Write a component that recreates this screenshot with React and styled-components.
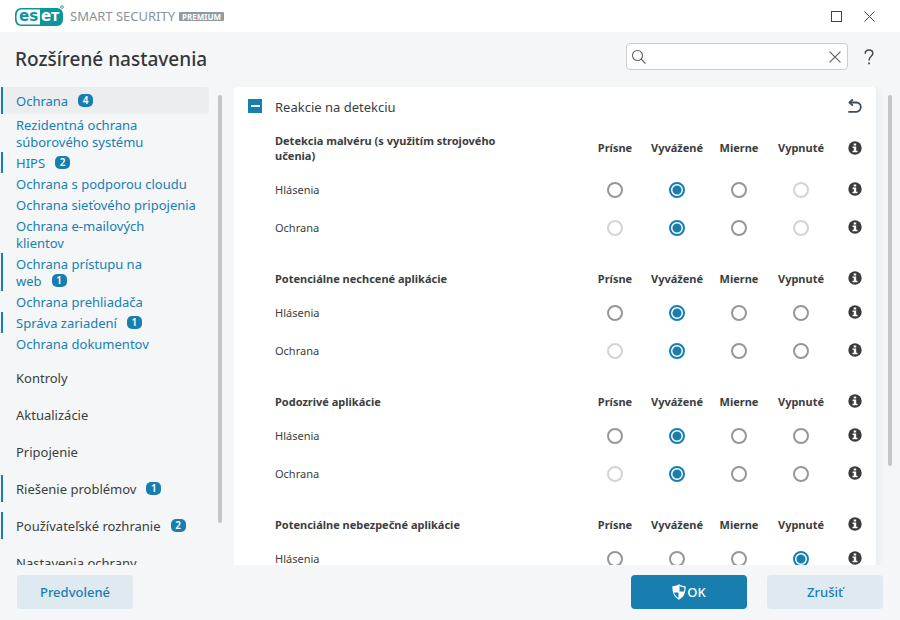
import React from 'react'
import styled, { createGlobalStyle } from 'styled-components'


const GlobalStyle = createGlobalStyle`
    * {
        box-sizing: border-box;
    }
    body {
        margin: 0;
        background: #f4f6f8;
        color: #3b3d40;
        font-family: "Noto Sans", "Open Sans", sans-serif;
        font-size: 13px;
    }
    button, input {
        font-family: inherit;
        font-size: inherit;
        color: inherit;
    }
`

const Window = styled.div`
    display: flex;
    flex-direction: column;
    height: 100vh;
    overflow: hidden;
`

export const TitleBar = styled.header`
    display: flex;
    align-items: center;
    flex: none;
    height: 32px;
    padding: 0 23px 0 15px;
    background: #fff;
`

const ProductName = styled.span`
    margin-left: 5px;
    color: #8b9399;
    font-weight: 400;
    line-height: 18px;
`

const Premium = styled.span`
    margin-left: 4px;
    padding: 0 3px;
    border-radius: 1px;
    background: #929a9f;
    color: #fff;
    font-size: 8px;
    font-weight: 700;
    line-height: 9px;
`

const WindowButtons = styled.div`
    display: flex;
    gap: 16px;
    margin-left: auto;
`

const IconButton = styled.button`
    display: flex;
    align-items: center;
    justify-content: center;
    flex: none;
    width: ${props => props.$size || '16px'};
    height: ${props => props.$size || '16px'};
    padding: 0;
    border: 0;
    background: none;
    color: ${props => props.$color || '#3f4246'};
    cursor: pointer;
`

const PageHeader = styled.div`
    display: flex;
    align-items: center;
    flex: none;
    height: 55px;
    padding: 0 23px 6px 15px;
`

const PageTitle = styled.h1`
    margin: 4px 0 0;
    color: #34373b;
    font-size: 19px;
    font-weight: 500;
    line-height: 26px;
`

const SearchBox = styled.label`
    display: flex;
    align-items: center;
    width: 222px;
    height: 27px;
    margin: 0 13px 0 auto;
    padding: 0 4px;
    border: 1px solid #cbcdcf;
    border-radius: 4px;
    background: #fff;
`

const SearchInput = styled.input`
    flex: 1;
    min-width: 0;
    padding: 0 4px;
    border: 0;
    outline: none;
    background: none;
`

const Content = styled.div`
    display: flex;
    flex: 1;
    min-height: 0;
`

const Sidebar = styled.aside`
    display: flex;
    flex: none;
    width: 234px;
    padding-left: 1px;
    overflow: hidden;
`

const Nav = styled.nav`
    flex: 1;
    min-width: 0;
`

const ScrollTrack = styled.div`
    flex: none;
    width: 4px;
    margin: ${props => props.$margin};
`

const ScrollThumb = styled.div`
    height: ${props => props.$length};
    border-radius: 2px;
    background: #c4c6c8;
`

const NavLink = styled.a`
    display: block;
    padding: 3px 12px 1px 13px;
    border-left: 2px solid ${props => (props.$changed ? '#187eb0' : 'transparent')};
    color: #187eb0;
    font-weight: 400;
    line-height: 17px;
    text-decoration: none;
    white-space: pre-line;
`

const NavSection = styled(NavLink)`
    padding-top: 6px;
    padding-bottom: 4px;
    margin-bottom: ${props => (props.$active ? '0' : '10px')};
    border-radius: 0 4px 4px 0;
    background: ${props => (props.$active ? '#ebedef' : 'none')};
    color: ${props => (props.$active ? '#187eb0' : '#3b3d40')};
`

const SubNav = styled.div`
    margin-bottom: 10px;
`

const LastWord = styled.span`
    white-space: nowrap;
`

const Badge = styled.span`
    display: inline-block;
    width: 15px;
    margin: 0 8px 0 10px;
    border-radius: 5px;
    background: #187eb0;
    color: #fff;
    font-size: 10px;
    font-weight: 600;
    line-height: 13px;
    text-align: center;
    vertical-align: 2px;
`

const Main = styled.main`
    display: flex;
    flex: 1;
    min-width: 0;
    overflow: hidden;
`

const Card = styled.section`
    flex: 1;
    min-width: 0;
    height: max-content;
    border-radius: 4px 4px 0 0;
    background: #fff;
    box-shadow: 0 0 8px rgba(60, 80, 100, 0.1);
`

const CardHead = styled.div`
    display: flex;
    align-items: center;
    gap: 13px;
    height: 38px;
    margin-bottom: 1px;
    padding: 0 14px;
`

const CardTitle = styled.h2`
    flex: 1;
    margin: 2px 0 0;
    font-size: 13px;
    font-weight: 400;
    line-height: 18px;
`

const SettingsTable = styled.table`
    width: 100%;
    margin-bottom: 17px;
    border-collapse: collapse;
    table-layout: fixed;
    font-size: 11px;
    line-height: 15px;
`

const LevelCol = styled.col`
    width: 62px;
`

const InfoCol = styled.col`
    width: 44px;
`

const GroupTitle = styled.th`
    padding: 7px 64px 8px 41px;
    text-align: left;
    font-weight: 700;
`

const LevelTitle = styled.th`
    padding: 0 0 2px;
    font-weight: 700;
    white-space: nowrap;
`

const RowTitle = styled.th`
    height: 38px;
    padding: 0 0 2px 41px;
    text-align: left;
    font-weight: 400;
`

const Cell = styled.td`
    padding: 0;
    text-align: center;
    vertical-align: middle;
`

const InfoCell = styled(Cell)`
    padding: 0 0 2px 2px;
`

const Radio = styled.input`
    appearance: none;
    display: block;
    width: 16px;
    height: 16px;
    margin: 0 auto;
    border: 2px solid #979797;
    border-radius: 50%;
    background: #fff;

    &:checked {
        border-color: #187eb0;
        background: radial-gradient(circle, #187eb0 4px, #fff 5px);
    }
    &:disabled {
        border-color: #d4d4d4;
    }
`

const InfoButton = styled(IconButton)`
    margin: 0 auto;
`

const Footer = styled.footer`
    display: flex;
    align-items: flex-start;
    flex: none;
    gap: 20px;
    height: 55px;
    padding: 10px 17px 0;
`

const ActionButton = styled.button`
    display: flex;
    align-items: center;
    justify-content: center;
    gap: 1px;
    width: 116px;
    height: 34px;
    padding: 0;
    margin-right: ${props => (props.$first ? 'auto' : '0')};
    border: 0;
    border-radius: 4px;
    background: ${props => (props.$primary ? '#187eb0' : '#dee9f0')};
    color: ${props => (props.$primary ? '#fff' : '#187eb0')};
    font-weight: 500;
    cursor: pointer;
`


const Logo = () => (
    <svg width="50" height="24" viewBox="0 0 50 24" role="img" aria-label="ESET">
        <rect x="0" y="4" width="48" height="18" rx="6" fill="#0a969c" />
        <path d="M7 5.500H25V20.500H7C3 20.500 1.500 18 1.500 13S3 5.500 7 5.500Z" fill="#fff" />
        <text x="4" y="17" fontFamily="DejaVu Sans" fontWeight="700" fontSize="15" fill="#0a969c">es</text>
        <text x="26" y="17" fontFamily="DejaVu Sans" fontWeight="700" fontSize="15" fill="#fff">e</text>
        <text x="36" y="17" fontFamily="DejaVu Sans" fontWeight="700" fontSize="12" fill="#fff">T</text>
        <circle cx="47" cy="3" r="1.500" fill="#0a969c" fillOpacity="0.3" stroke="#0a969c" strokeWidth="0.600" />
    </svg>
)

const CloseIcon = ({ size = 11 }) => (
    <svg width={size} height={size} viewBox="0 0 11 11" fill="none" stroke="currentColor" strokeWidth="1">
        <path d="M0.500 0.500L10.500 10.500M10.500 0.500L0.500 10.500" />
    </svg>
)

const MaximizeIcon = () => (
    <svg width="12" height="12" viewBox="0 0 12 12" fill="none" stroke="currentColor">
        <rect x="0.500" y="1.500" width="10" height="10" />
    </svg>
)

const SearchIcon = () => (
    <svg width="16" height="16" viewBox="0 0 16 16" fill="none" stroke="#5a5d61" strokeWidth="1.100">
        <circle cx="6.500" cy="6.500" r="5" />
        <path d="M10.200 10.200L14.500 14.500" />
    </svg>
)

const HelpIcon = () => (
    <svg width="10" height="16" viewBox="0 0 10 16" fill="none" stroke="#3d4c57" strokeWidth="1.500">
        <path d="M1.200 4.800C1.200 2.300 2.800 1 5 1S8.800 2.300 8.800 4.400C8.800 7.300 5 7.300 5 11.500" />
        <path d="M5 13.500V15.300" strokeWidth="1.800" />
    </svg>
)

const CollapseIcon = () => (
    <svg width="14" height="14" viewBox="0 0 14 14">
        <rect width="14" height="14" fill="#187eb0" />
        <rect x="3" y="6" width="9" height="2" fill="#fff" />
    </svg>
)

const UndoIcon = () => (
    <svg width="14" height="14" viewBox="0 0 14 14" fill="none" stroke="#3d4c57" strokeWidth="1.800">
        <path d="M1.500 3.500H8.300C11 3.500 12.800 5.500 12.800 8.100S11 12.800 8.300 12.800H0.300" />
        <path d="M4.800 0.300L1.500 3.500L4.800 6.700" />
    </svg>
)

const InfoIcon = () => (
    <svg width="14" height="14" viewBox="0 0 14 14">
        <circle cx="7" cy="7" r="6.700" fill="#3b3b3b" />
        <path d="M5.700 2.400H8.200V4.400H5.700ZM4.600 5.500H8.200V9.800H9.500V11.300H4.500V9.800H5.800V7H4.600Z" fill="#fff" />
    </svg>
)

const ShieldIcon = () => (
    <svg width="14" height="16" viewBox="0 0 14 16">
        <path d="M7 0.300C8.700 1.500 11 2.200 13.600 2.300C13.800 8.500 12 13 7 15.800C2 13 0.200 8.500 0.400 2.300C3 2.200 5.300 1.500 7 0.300Z" fill="#fff" />
        <path d="M7.500 2C8.900 2.700 10.600 3.200 12.400 3.400C12.400 5 12.300 6.200 12 7.500H7.500Z" fill="#187eb0" />
        <path d="M6.500 8.500V14C4 12.500 2.600 10.800 2 8.500Z" fill="#187eb0" />
    </svg>
)


const levels = ['Prísne', 'Vyvážené', 'Mierne', 'Vypnuté']

// selected: index of the chosen level, disabled: indexes of locked levels
const groups = [
    {
        title: 'Detekcia malvéru (s využitím strojového učenia)',
        rows: [
            { label: 'Hlásenia', selected: 1, disabled: [3] },
            { label: 'Ochrana', selected: 1, disabled: [0, 3] },
        ],
    },
    {
        title: 'Potenciálne nechcené aplikácie',
        rows: [
            { label: 'Hlásenia', selected: 1, disabled: [] },
            { label: 'Ochrana', selected: 1, disabled: [0] },
        ],
    },
    {
        title: 'Podozrivé aplikácie',
        rows: [
            { label: 'Hlásenia', selected: 1, disabled: [] },
            { label: 'Ochrana', selected: 1, disabled: [0] },
        ],
    },
    {
        title: 'Potenciálne nebezpečné aplikácie',
        rows: [
            { label: 'Hlásenia', selected: 3, disabled: [] },
        ],
    },
]

const protection = [
    { label: 'Rezidentná ochrana súborového systému' },
    { label: 'HIPS', count: 2 },
    { label: 'Ochrana s podporou cloudu' },
    { label: 'Ochrana sieťového pripojenia' },
    { label: 'Ochrana e-mailových\nklientov' },
    { label: 'Ochrana prístupu na web', count: 1 },
    { label: 'Ochrana prehliadača' },
    { label: 'Správa zariadení', count: 1 },
    { label: 'Ochrana dokumentov' },
]

const sections = [
    { label: 'Kontroly' },
    { label: 'Aktualizácie' },
    { label: 'Pripojenie' },
    { label: 'Riešenie problémov', count: 1 },
    { label: 'Používateľské rozhranie', count: 2 },
    { label: 'Nastavenia ochrany' },
]

// keeps the counter on the same line as the last word of the label
const NavLabel = ({ label, count }) => {
    if (!count) return label
    const words = label.split(' ')
    const last = words.pop()
    return (
        <>
            {words.length > 0 && words.join(' ') + ' '}
            <LastWord>{last}<Badge>{count}</Badge></LastWord>
        </>
    )
}

const SettingsGroup = ({ title, rows, id }) => (
    <SettingsTable>
        <colgroup>
            <col />
            {levels.map(level => <LevelCol key={level} />)}
            <InfoCol />
        </colgroup>
        <thead>
            <tr>
                <GroupTitle scope="col">{title}</GroupTitle>
                {levels.map(level => <LevelTitle key={level} scope="col">{level}</LevelTitle>)}
                <InfoCell><InfoButton aria-label={`Informácie: ${title}`}><InfoIcon /></InfoButton></InfoCell>
            </tr>
        </thead>
        <tbody>
            {rows.map(row => (
                <tr key={row.label}>
                    <RowTitle scope="row">{row.label}</RowTitle>
                    {levels.map((level, i) => (
                        <Cell key={level}>
                            <Radio
                                type="radio"
                                name={`${id}-${row.label}`}
                                aria-label={`${row.label}: ${level}`}
                                defaultChecked={row.selected === i}
                                disabled={row.disabled.includes(i)}
                            />
                        </Cell>
                    ))}
                    <InfoCell><InfoButton aria-label={`Informácie: ${row.label}`}><InfoIcon /></InfoButton></InfoCell>
                </tr>
            ))}
        </tbody>
    </SettingsTable>
)

export default function App() {
    return (
        <Window>
            <GlobalStyle />
            <TitleBar>
                <Logo />
                <ProductName>SMART SECURITY</ProductName>
                <Premium>PREMIUM</Premium>
                <WindowButtons>
                    <IconButton aria-label="Maximalizovať"><MaximizeIcon /></IconButton>
                    <IconButton aria-label="Zavrieť"><CloseIcon /></IconButton>
                </WindowButtons>
            </TitleBar>
            <PageHeader>
                <PageTitle>Rozšírené nastavenia</PageTitle>
                <SearchBox>
                    <SearchIcon />
                    <SearchInput type="text" aria-label="Hľadať" />
                    <IconButton aria-label="Vymazať" $color="#5a5d61"><CloseIcon size={12} /></IconButton>
                </SearchBox>
                <IconButton aria-label="Pomocník"><HelpIcon /></IconButton>
            </PageHeader>
            <Content>
                <Sidebar>
                    <Nav>
                        <NavSection href="#ochrana" $active $changed><NavLabel label="Ochrana" count={4} /></NavSection>
                        <SubNav>
                            {protection.map(item => (
                                <NavLink key={item.label} href="#ochrana" $changed={item.count > 0}><NavLabel {...item} /></NavLink>
                            ))}
                        </SubNav>
                        {sections.map(item => (
                            <NavSection key={item.label} href="#sekcia" $changed={item.count > 0}><NavLabel {...item} /></NavSection>
                        ))}
                    </Nav>
                    <ScrollTrack $margin="8px 12px 0 9px"><ScrollThumb $length="91%" /></ScrollTrack>
                </Sidebar>
                <Main>
                    <Card>
                        <CardHead>
                            <IconButton $size="14px" aria-label="Zbaliť"><CollapseIcon /></IconButton>
                            <CardTitle>Reakcie na detekciu</CardTitle>
                            <IconButton $size="14px" aria-label="Obnoviť"><UndoIcon /></IconButton>
                        </CardHead>
                        {groups.map((group, i) => <SettingsGroup key={group.title} id={`g${i}`} {...group} />)}
                    </Card>
                    <ScrollTrack $margin="8px 8px 0 12px"><ScrollThumb $length="79%" /></ScrollTrack>
                </Main>
            </Content>
            <Footer>
                <ActionButton $first>Predvolené</ActionButton>
                <ActionButton $primary><ShieldIcon />OK</ActionButton>
                <ActionButton>Zrušiť</ActionButton>
            </Footer>
        </Window>
    )
}
